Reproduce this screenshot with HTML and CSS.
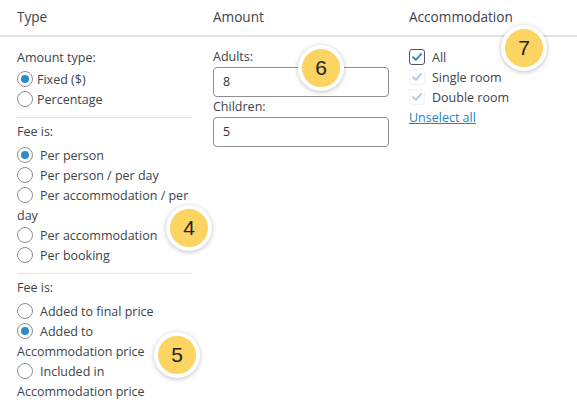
FILE: index.html
```html
<!DOCTYPE html>
<html>
<head>
<meta charset="utf-8">
<link rel="stylesheet" href="styles.css">
</head>
<body>
<div class="table">
  <div class="head">
    <div class="th">Type</div>
    <div class="th">Amount</div>
    <div class="th">Accommodation</div>
  </div>
  <div class="body">
    <div class="col col-type">
      <div class="group">
        <div class="glabel">Amount type:</div>
        <label class="opt opt-tight"><span class="radio checked"></span>Fixed ($)</label>
        <label class="opt opt-tight"><span class="radio"></span>Percentage</label>
      </div>
      <div class="group">
        <div class="glabel">Fee is:</div>
        <label class="opt"><span class="radio checked"></span>Per person</label>
        <label class="opt"><span class="radio"></span>Per person / per day</label>
        <label class="opt"><span class="radio"></span>Per accommodation / per day</label>
        <label class="opt"><span class="radio"></span>Per accommodation</label>
        <label class="opt"><span class="radio"></span>Per booking</label>
      </div>
      <div class="group last">
        <div class="glabel">Fee is:</div>
        <label class="opt"><span class="radio"></span>Added to final price</label>
        <label class="opt"><span class="radio checked"></span>Added to<br>Accommodation price</label>
        <label class="opt"><span class="radio"></span>Included in<br>Accommodation price</label>
      </div>
    </div>
    <div class="col col-amount">
      <div class="field">
        <div class="flabel">Adults:</div>
        <div class="input">8</div>
      </div>
      <div class="field">
        <div class="flabel">Children:</div>
        <div class="input">5</div>
      </div>
    </div>
    <div class="col col-acc">
      <label class="chk"><span class="box on"><svg viewBox="0 0 16 16"><path d="M3.5 8.2 L6.7 11.2 L12.6 4.6" /></svg></span>All</label>
      <label class="chk"><span class="box dis"><svg viewBox="0 0 16 16"><path d="M3.5 8.2 L6.7 11.2 L12.6 4.6" /></svg></span>Single room</label>
      <label class="chk"><span class="box dis"><svg viewBox="0 0 16 16"><path d="M3.5 8.2 L6.7 11.2 L12.6 4.6" /></svg></span>Double room</label>
      <a class="link" href="#">Unselect all</a>
    </div>
  </div>
</div>
<div class="badge b4">4</div>
<div class="badge b5">5</div>
<div class="badge b6">6</div>
<div class="badge b7">7</div>
</body>
</html>
```
FILE: styles.css
```css
html, body {
  margin: 0;
  padding: 0;
  background: #fff;
}
body {
  font-family: "Open Sans", "DejaVu Sans", sans-serif;
  font-size: 12.5px;
  color: #3c434a;
  width: 577px;
  height: 411px;
  overflow: hidden;
  position: relative;
}
.head {
  display: grid;
  grid-template-columns: 175px 175px 1fr;
  column-gap: 21px;
  padding-left: 17px;
  height: 35px;
  align-items: center;
  border-bottom: 2px solid #e3e3e5;
}
.th {
  font-size: 13.6px;
  color: #3c434a;
  padding-bottom: 2px;
}
.body {
  display: grid;
  grid-template-columns: 175px 175px 1fr;
  column-gap: 21px;
  padding-left: 17px;
}
.col {
  padding-top: 11px;
}
.col-amount {
  padding-top: 10px;
}
.group {
  padding: 4px 0 7px;
  border-bottom: 1px solid #e3e3e5;
}
.group:first-child {
  padding-top: 0;
}
.group.last {
  border-bottom: none;
}
.glabel {
  line-height: 20px;
  margin-bottom: 2px;
}
.group:not(:first-child) .glabel {
  margin-bottom: 4px;
}
.opt {
  display: block;
  line-height: 20px;
}
.radio {
  display: inline-block;
  box-sizing: border-box;
  width: 16px;
  height: 16px;
  border: 1px solid #8c8f94;
  border-radius: 50%;
  vertical-align: -3px;
  margin-right: 7px;
  position: relative;
}
.opt-tight .radio {
  margin-right: 4px;
}
.radio.checked::after {
  content: "";
  position: absolute;
  left: 3px;
  top: 3px;
  width: 8px;
  height: 8px;
  border-radius: 50%;
  background: #2a8bc6;
}
.flabel {
  line-height: 20px;
}
.input {
  box-sizing: border-box;
  width: 176px;
  height: 30px;
  border: 1px solid #8c8f94;
  border-radius: 4px;
  padding: 0 9px;
  line-height: 28px;
  color: #2c3338;
}
.chk {
  display: block;
  line-height: 20px;
}
.box {
  display: inline-block;
  box-sizing: border-box;
  width: 16px;
  height: 16px;
  border-radius: 3px;
  vertical-align: -3px;
  margin-right: 7px;
}
.box svg {
  display: block;
  width: 14px;
  height: 14px;
  fill: none;
  stroke-width: 2.2;
  stroke-linecap: round;
  stroke-linejoin: round;
}
.box.on {
  border: 1px solid #50575e;
}
.box.on svg {
  stroke: #2a8bc6;
}
.box.dis {
  border: 1px solid #f2f2f2;
}
.box.dis svg {
  stroke: #a9cde6;
}
.link {
  display: block;
  line-height: 20px;
  color: #2a7fb8;
  text-decoration: underline;
}
.badge {
  position: absolute;
  width: 38px;
  height: 38px;
  border-radius: 50%;
  background: #fcd462;
  border: 4px solid #fff;
  box-shadow: 0 1px 5px rgba(0,0,0,0.25);
  font-family: "Liberation Sans", Arial, sans-serif;
  font-size: 21px;
  color: #222;
  display: flex;
  align-items: center;
  justify-content: center;
}
.b4 { left: 166px; top: 205px; }
.b5 { left: 154px; top: 332px; }
.b6 { left: 298px; top: 45px; }
.b7 { left: 501px; top: 25px; }
```
